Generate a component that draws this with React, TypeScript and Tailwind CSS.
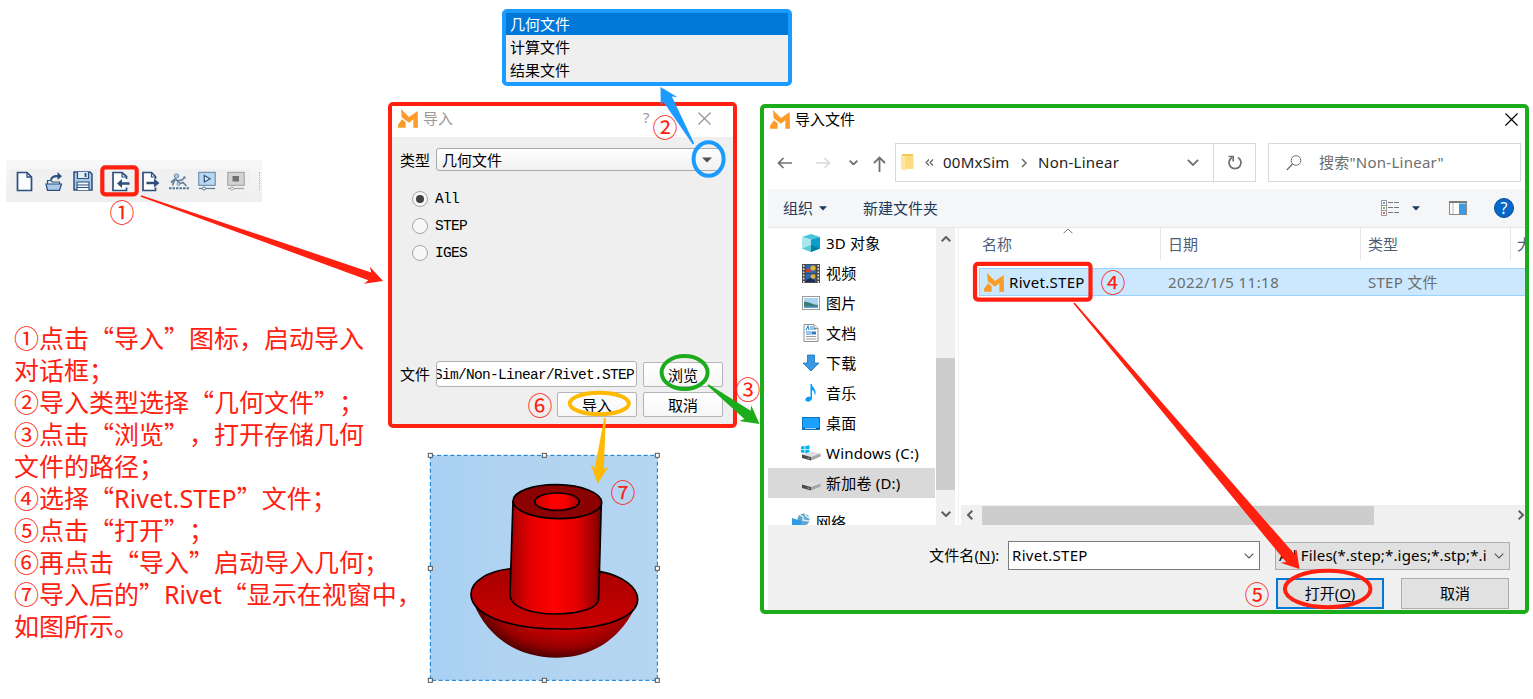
import React from "react";

const UI = "font-['Noto_Sans','Noto_Sans_CJK_SC',sans-serif]";
const CJK = "font-['Noto_Sans_CJK_SC',sans-serif]";
const MONO = "font-['Liberation_Mono',monospace]";

function Logo({ className = "" }: { className?: string }) {
  return (
    <svg className={`shrink-0 ${className}`} width="20" height="19" viewBox="0 0 60 57">
      <path fill="#fb9b28" d="M9 0 L33 24 L59 6 L60 56 H46 V31 L33 41 L11 25Z" />
      <path fill="#fb9b28" d="M0 56 V47 L12 31 L23 40 V56Z" />
    </svg>
  );
}

function Mark({ children, className }: { children: string; className: string }) {
  return (
    <span
      className={`absolute flex h-[26px] w-[26px] items-center justify-center text-[25px] leading-[26px] text-[#ff2010] ${CJK} ${className}`}
    >
      {children}
    </span>
  );
}

function Lat({ children, className = "" }: { children: string; className?: string }) {
  return <span className={`font-['Noto_Sans',sans-serif] ${className}`}>{children}</span>;
}

/* ---------- toolbar ---------- */

function ToolCell({ children, className = "" }: { children: React.ReactNode; className?: string }) {
  return <div className={`flex h-[24px] items-center justify-center bg-[#f0f0f0] ${className}`}>{children}</div>;
}

function Toolbar() {
  return (
    <div className="absolute left-[6px] top-[160px] flex h-[42px] w-[256px] items-center bg-linear-to-b from-[#f8f8f8] to-[#eeeeee] pl-[4px]">
      <ToolCell className="w-[29px]">
        <svg width="17" height="21" viewBox="0 0 17 21">
          <path d="M1.500 1.500H11L15.500 6V19.500H1.500Z" fill="#fbfcfd" stroke="#2d4f7c" strokeWidth="1.700" />
          <path d="M11 1.500V6H15.500" fill="none" stroke="#2d4f7c" strokeWidth="1.300" />
        </svg>
      </ToolCell>
      <ToolCell className="w-[29px]">
        <svg width="18" height="21" viewBox="0 0 18 21">
          <path d="M2.500 19V9.500H6L7.500 11H14.500V13" fill="#dbe9f6" stroke="#2d4f7c" strokeWidth="1.200" />
          <path d="M1 13H16.500L14.500 19.300H2.500Z" fill="#a9cbe8" stroke="#2d4f7c" strokeWidth="1.200" />
          <path d="M5 8.500C6 5 9 3.500 12.500 4V1L17 5.300L12.500 9V6.200C9 6 8 6.500 6.500 9.500Z" fill="#2d4f7c" />
        </svg>
      </ToolCell>
      <ToolCell className="w-[29px]">
        <svg width="20" height="20" viewBox="0 0 20 20">
          <path d="M1 1H17L19 3V19H1Z" fill="#a9cbe8" stroke="#2d4f7c" strokeWidth="1.500" />
          <path d="M4.500 1V7.500H15.500V1" fill="#e4eef7" stroke="#2d4f7c" strokeWidth="1.200" />
          <path d="M12.500 2V6" stroke="#2d4f7c" strokeWidth="1.800" />
          <path d="M4 19V11H16V19M4 14H16M4 16.500H16" fill="#f6f9fc" stroke="#2d4f7c" strokeWidth="1.100" />
        </svg>
      </ToolCell>
      <ToolCell className="ml-[9px] w-[28px]">
        <svg width="19" height="21" viewBox="0 0 19 21">
          <path d="M15.500 8V5.500L11 1.500H2V19.500H15.500V16.500" fill="#fbfcfd" stroke="#2d4f7c" strokeWidth="1.700" />
          <path d="M11 1.500V6H15.500" fill="none" stroke="#2d4f7c" strokeWidth="1.200" />
          <path d="M6 12.500L11 8V11.300H18.500V13.700H11V17Z" fill="#2d4f7c" />
        </svg>
      </ToolCell>
      <ToolCell className="ml-[2px] w-[29px]">
        <svg width="19" height="21" viewBox="0 0 19 21">
          <path d="M14.500 8V5.500L10.500 1.500H2V19.500H14.500V16.500" fill="#fbfcfd" stroke="#2d4f7c" strokeWidth="1.700" />
          <path d="M10.500 1.500V6H14.500" fill="none" stroke="#2d4f7c" strokeWidth="1.200" />
          <path d="M18.500 12L13 7.500V10.800H5.500V13.200H13V16.500Z" fill="#2d4f7c" />
        </svg>
      </ToolCell>
      <ToolCell className="w-[27px]">
        <svg width="20" height="17" viewBox="0 0 20 17">
          <circle cx="7.500" cy="3" r="2.100" fill="#b9d3ea" stroke="#5f7f9f" />
          <path d="M2 9.500L6 6L9 8L13.500 6.500L16 4M6 6L3.500 12.500M8 7.500L11 10.500L14 9.500L17.500 13" fill="none" stroke="#5f7f9f" strokeWidth="1.700" />
          <circle cx="15.500" cy="4.500" r="1.300" fill="#6d8dab" />
          <circle cx="9.500" cy="11" r="1.500" fill="#b9d3ea" stroke="#6d8dab" strokeWidth=".8" />
          <path d="M0 15.300H20" stroke="#56789b" strokeWidth="1.900" strokeDasharray="2.500 1" />
        </svg>
      </ToolCell>
      <ToolCell className="w-[29px]">
        <svg width="18" height="20" viewBox="0 0 18 20">
          <rect x=".8" y="1.300" width="16.400" height="13" fill="#b8d8f0" stroke="#5b7fa3" />
          <path d="M6.300 4.500L12 7.800L6.300 11Z" fill="#e4f0fa" stroke="#2d4f7c" strokeWidth="1.200" />
          <path d="M1 17.500H17" stroke="#56789b" strokeWidth="1.200" />
          <circle cx="6" cy="17.500" r="1.500" fill="#fff" stroke="#56789b" />
        </svg>
      </ToolCell>
      <ToolCell className="w-[29px]">
        <svg width="18" height="20" viewBox="0 0 18 20">
          <rect x=".8" y="1.300" width="16.400" height="13" fill="#d2d2d2" stroke="#9c9c9c" />
          <rect x="5.500" y="5" width="6.500" height="5.500" fill="#707070" />
          <path d="M1 17.500H17" stroke="#a0a0a0" strokeWidth="1.200" />
          <circle cx="5" cy="17.500" r="1.500" fill="#fff" stroke="#a0a0a0" />
        </svg>
      </ToolCell>
      <div className="ml-[9px] h-[18px] border-l border-dotted border-[#b5b5b5]" />
    </div>
  );
}

/* ---------- type menu ---------- */

function TypeMenu() {
  return (
    <div className={`absolute left-[502px] top-[9px] h-[77px] w-[290px] rounded-[5px] border-4 border-[#1b9bff] bg-[#efefef] text-[15px] leading-[21px] ${CJK}`}>
      <div className="h-[22px] bg-[#0078d7] pl-[4px] text-white">几何文件</div>
      <div className="h-[23px] pl-[4px] leading-[23px] text-black">计算文件</div>
      <div className="h-[23px] pl-[4px] leading-[23px] text-black">结果文件</div>
    </div>
  );
}

/* ---------- import dialog ---------- */

function Radio({ label, on = false }: { label: string; on?: boolean }) {
  return (
    <div className="flex h-[27px] items-center gap-[7px]">
      <span className="flex h-[16px] w-[16px] items-center justify-center rounded-full border border-[#a6a6a6] bg-[#f7f7f7]">
        {on && <span className="h-[8px] w-[8px] rounded-full bg-[#404040]" />}
      </span>
      <span className={`text-[14.5px] leading-[20px] tracking-[-0.7px] ${MONO}`}>{label}</span>
    </div>
  );
}

function PushButton({ children }: { children: string }) {
  return (
    <div className="flex h-[25px] w-[80px] items-center justify-center rounded-[2px] border border-[#b4b4b4] bg-linear-to-b from-white to-[#f6f6f6] leading-[23px]">
      {children}
    </div>
  );
}

function ImportDialog() {
  return (
    <div
      className={`absolute left-[388px] top-[102px] flex h-[326px] w-[349px] flex-col rounded-[5px] border-4 border-[#ff2010] bg-[#efefef] text-[15px] text-black ${CJK}`}
    >
      <div className="flex h-[31px] shrink-0 items-start bg-white pl-[6px] text-[#999]">
        <Logo className="mt-[3px]" />
        <span className="ml-[5px] leading-[23px]">导入</span>
        <span className={`ml-[190px] leading-[23px] ${UI}`}>?</span>
        <svg className="ml-[48px] mt-[6px]" width="13" height="13" viewBox="0 0 13 13">
          <path d="M.5 .5L12.500 12.500M12.500 .5L.5 12.500" stroke="#8f8f8f" strokeWidth="1.100" />
        </svg>
      </div>
      <div className="mt-[11px] flex h-[23px] shrink-0 items-center pl-[8px]">
        <span className="w-[36px] leading-[23px]">类型</span>
        <div className="flex h-[23px] w-[287px] items-center justify-between rounded-[3px] border border-[#aaa] bg-linear-to-b from-white to-[#f0f0f0] pl-[5px] pr-[10px]">
          <span className="leading-[21px]">几何文件</span>
          <svg width="10" height="6" viewBox="0 0 10 6">
            <path d="M0 .5H10L5 5.500Z" fill="#505050" />
          </svg>
        </div>
      </div>
      <div className="mt-[14px] flex shrink-0 flex-col pl-[20px]">
        <Radio label="All" on />
        <Radio label="STEP" />
        <Radio label="IGES" />
      </div>
      <div className="mt-[95px] flex h-[26px] shrink-0 items-center pl-[8px]">
        <span className="w-[36px] leading-[26px]">文件</span>
        <div className="flex h-[26px] w-[201px] items-center justify-end overflow-hidden whitespace-nowrap rounded-[3px] border border-[#b0b0b0] bg-white pr-[2px]">
          <span className={`pt-[2px] text-[14.5px] leading-[22px] tracking-[-0.7px] ${MONO}`}>Sim/Non-Linear/Rivet.STEP</span>
        </div>
        <div className="ml-[6px]">
          <PushButton>浏览</PushButton>
        </div>
      </div>
      <div className="mt-[5px] flex shrink-0 gap-[6px] pl-[165px]">
        <PushButton>导入</PushButton>
        <PushButton>取消</PushButton>
      </div>
    </div>
  );
}

/* ---------- instructions ---------- */

function Notes() {
  return (
    <div
      lang="zh-CN"
      className={`absolute left-[14px] top-[321px] grid auto-rows-[32px] whitespace-nowrap text-[25px] leading-[32px] text-[#ff2010] [text-spacing-trim:space-all] ${CJK}`}
    >
      <div>①点击“导入”图标，启动导入</div>
      <div>对话框；</div>
      <div>②导入类型选择“几何文件”；</div>
      <div>③点击“浏览”，打开存储几何</div>
      <div>文件的路径；</div>
      <div>
        ④选择“<Lat className="tracking-[0.15px]">Rivet.STEP</Lat>”文件；
      </div>
      <div>⑤点击“打开”；</div>
      <div>⑥再点击“导入”启动导入几何；</div>
      <div>
        ⑦导入后的”<Lat>Rivet</Lat>“显示在视窗中，
      </div>
      <div>如图所示。</div>
    </div>
  );
}

/* ---------- rivet view ---------- */

function RivetView() {
  const handles = [
    [31, 46], [373, 46], [712, 46],
    [31, 385], [712, 385],
    [31, 721], [373, 721], [712, 721],
  ];
  return (
    <svg className="absolute left-[420px] top-[440px]" width="250" height="250" viewBox="0 0 750 750">
      <defs>
        <linearGradient id="sky">
          <stop offset="0" stopColor="#a8d0f3" />
          <stop offset=".3" stopColor="#b0d3f1" />
          <stop offset="1" stopColor="#b5d6f1" />
        </linearGradient>
        <linearGradient id="shaft">
          <stop offset="0" stopColor="#9c0000" />
          <stop offset=".22" stopColor="#e40000" />
          <stop offset=".48" stopColor="#ff0000" />
          <stop offset=".72" stopColor="#e60000" />
          <stop offset=".9" stopColor="#a80000" />
          <stop offset="1" stopColor="#700000" />
        </linearGradient>
        <linearGradient id="hole">
          <stop offset="0" stopColor="#c80000" />
          <stop offset=".4" stopColor="#ff0000" />
          <stop offset=".7" stopColor="#f40000" />
          <stop offset="1" stopColor="#a00000" />
        </linearGradient>
        <linearGradient id="rim" x2="0" y2="1">
          <stop offset="0" stopColor="#a80000" />
          <stop offset="1" stopColor="#ca0000" />
        </linearGradient>
        <radialGradient id="dome" gradientUnits="userSpaceOnUse" cx="430" cy="480" r="270" gradientTransform="translate(0 168) scale(1 .65)">
          <stop offset="0" stopColor="#e00000" />
          <stop offset=".5" stopColor="#c80000" />
          <stop offset=".8" stopColor="#9a0000" />
          <stop offset="1" stopColor="#4c0000" />
        </radialGradient>
      </defs>
      <rect x="31" y="46" width="681" height="675" fill="url(#sky)" stroke="#0078d7" strokeWidth="3" strokeDasharray="12 8" />
      <path d="M163 495C195 570 270 653 410 653C540 653 612 570 643 507Z" fill="url(#dome)" />
      <path
        d="M153 462C153 424 205 392 272 386V400H539V394C610 408 653 442 653 478C653 530 558 567 420 567C260 567 153 522 153 462Z"
        fill="url(#rim)"
        stroke="#000"
        strokeWidth="5"
      />
      <path d="M279 182L270 468C274 502 336 522 404 522C480 522 536 504 536 476L544 186C530 250 300 250 279 182Z" fill="url(#shaft)" stroke="#000" strokeWidth="5" />
      <ellipse cx="412" cy="185" rx="133" ry="51" fill="#8b0000" stroke="#000" strokeWidth="5" transform="rotate(1 412 185)" />
      <ellipse cx="411" cy="185" rx="67" ry="26" fill="url(#hole)" stroke="#000" strokeWidth="5" />
      {handles.map(([x, y]) => (
        <rect key={`${x}-${y}`} x={x - 6} y={y - 6} width="12" height="12" fill="#fff" stroke="#555" strokeWidth="3" />
      ))}
    </svg>
  );
}

/* ---------- open-file window ---------- */

function Chevron({ color = "#606060", w = 10, sw = 1.5, className = "" }: { color?: string; w?: number; sw?: number; className?: string }) {
  return (
    <svg className={`shrink-0 ${className}`} width={w} height={w * 0.6} viewBox="0 0 10 6">
      <path d="M.7 .7L5 5L9.300 .7" fill="none" stroke={color} strokeWidth={sw} />
    </svg>
  );
}

function Drive({ win = false }: { win?: boolean }) {
  return (
    <svg width="20" height="18" viewBox="0 0 20 18">
      {win && (
        <path d="M0 2.500L3.500 2V5H0ZM4.300 1.900L8.500 1.200V5H4.300ZM0 5.800H3.500V9L0 8.500ZM4.300 5.800H8.500V9.700L4.300 9.100Z" fill="#00b4f0" />
      )}
      <path d="M1 10.500L10 7.500L19.500 9.500L10 13Z" fill="#dedee0" />
      <path d="M1 10.500L10 13V16.500L1 14Z" fill="#4a4a4a" />
      <path d="M10 13L19.500 9.500V12.500L10 16.500Z" fill="#a5a5a5" />
      <path d="M6.500 13.800L8.500 14.400" stroke="#6fdc6f" strokeWidth="1" />
    </svg>
  );
}

const icons: Record<string, React.ReactNode> = {
  cube: (
    <svg width="18" height="18" viewBox="0 0 18 18">
      <path d="M9 0L18 3L9 5.500L0 3Z" fill="#45c3d8" />
      <path d="M0 3L9 5.500V18L0 14.500Z" fill="#a9e6ec" />
      <path d="M18 3L9 5.500V18L18 14.500Z" fill="#0a9fcb" />
      <path d="M0 14.500L9 11V18Z" fill="#5ccbd8" />
      <path d="M9 11L18 14.500L9 18Z" fill="#087f9f" />
    </svg>
  ),
  video: (
    <svg width="18" height="19" viewBox="0 0 18 19">
      <rect width="18" height="19" fill="#4a4a4a" />
      <rect x="4" y="1" width="10" height="8" fill="#3267b8" />
      <rect x="4" y="10" width="10" height="8" fill="#3267b8" />
      <circle cx="11" cy="4" r="2.600" fill="#e6b52e" />
      <circle cx="11" cy="12.500" r="2.300" fill="#e6b52e" />
      <path d="M4 5H8L9 8H4Z" fill="#d5402b" />
      <path d="M4 16L8 14L13 16V18H4Z" fill="#1a2d58" />
      <path d="M1.700 1V19M16.300 1V19" stroke="#e8e8e8" strokeWidth="1.500" strokeDasharray="1.700 1.500" />
    </svg>
  ),
  picture: (
    <svg width="18" height="14" viewBox="0 0 18 14">
      <rect x=".5" y=".5" width="17" height="13" fill="#fff" stroke="#9a9a9a" />
      <rect x="2" y="2" width="14" height="10" fill="#a9d4f2" />
      <path d="M2 6C6 5 10 9 16 9V12H2Z" fill="#3d7a78" />
      <path d="M2 10.500H16V12H2Z" fill="#5f9fd0" />
    </svg>
  ),
  doc: (
    <svg width="16" height="18" viewBox="0 0 16 18">
      <path d="M1 .5H11L15 4.500V17.500H1Z" fill="#fff" stroke="#8f8f8f" />
      <path d="M11 .5V4.500H15" fill="#ddd" stroke="#8f8f8f" />
      <path d="M3 6L5 2L6 6M7 3H10M7 5H13M3 8H8M3 10H8" stroke="#2b8ed6" strokeWidth="1.100" fill="none" />
      <path d="M3 12.500H13M3 15H13" stroke="#9a9a9a" />
      <rect x="8.500" y="7.500" width="4.500" height="3" fill="#3a78b8" />
    </svg>
  ),
  down: (
    <svg width="18" height="18" viewBox="0 0 18 18">
      <path d="M5.500 1H12.500V9H17L9 17L1 9H5.500Z" fill="#3b97e3" stroke="#1d73bd" strokeWidth=".8" />
    </svg>
  ),
  music: (
    <svg width="18" height="18" viewBox="0 0 18 18">
      <path d="M8.500 0H9.800C10.500 4 14.500 5 13.500 10L12.500 11C12.800 8 11.500 6.500 10 6V14.500C9.500 17 7 18 5 17.500C2.500 17 3 13.500 6 12.800C7 12.500 8 12.700 8.500 13Z" fill="#0a9bf5" />
    </svg>
  ),
  desktop: (
    <svg width="18" height="13" viewBox="0 0 18 13">
      <rect x=".5" y=".5" width="17" height="12" fill="#1ba1ff" stroke="#0f75bd" />
      <path d="M1 11.500H17" stroke="#0b5c97" strokeWidth="1.200" />
      <path d="M3 11.500H14" stroke="#d8efff" strokeWidth=".8" />
    </svg>
  ),
  net: (
    <svg width="18" height="18" viewBox="0 0 18 18">
      <circle cx="11.500" cy="6.500" r="6" fill="#5fa3c9" />
      <path d="M8 2C11 3 12 5 11 7C13 8 15 7 17 8M13 1C13 3 15 4 17 5" stroke="#d9edf4" strokeWidth="1.500" fill="none" />
      <path d="M0 5L9 8V18L0 15Z" fill="#2b9be8" />
    </svg>
  ),
};

function SideItem({ icon, label, selected = false }: { icon: React.ReactNode; label: string; selected?: boolean }) {
  return (
    <div className={`flex h-[30px] shrink-0 items-center whitespace-nowrap pl-[33px] ${selected ? "bg-[#d9d9d9]" : ""}`}>
      <span className="flex w-[20px] justify-center">{icon}</span>
      <span className="ml-[5px] leading-[29px] tracking-[0.2px]">{label}</span>
    </div>
  );
}

function Sidebar() {
  return (
    <div className="flex h-[297px] w-[167px] shrink-0 flex-col overflow-hidden">
      <SideItem icon={icons.cube} label="3D 对象" />
      <SideItem icon={icons.video} label="视频" />
      <SideItem icon={icons.picture} label="图片" />
      <SideItem icon={icons.doc} label="文档" />
      <SideItem icon={icons.down} label="下载" />
      <SideItem icon={icons.music} label="音乐" />
      <SideItem icon={icons.desktop} label="桌面" />
      <SideItem icon={<Drive win />} label="Windows (C:)" />
      <SideItem icon={<Drive />} label="新加卷 (D:)" selected />
      <div className="mt-[9px] flex h-[30px] shrink-0 items-center pl-[24px]">
        {icons.net}
        <span className="ml-[6px]">网络</span>
      </div>
    </div>
  );
}

function FileWindow() {
  return (
    <div
      className={`absolute left-[760px] top-[104px] h-[510px] w-[769px] overflow-hidden rounded-[5px] border-4 border-[#1bab1b] bg-white text-[15px] text-black ${UI}`}
    >
      <div className="flex h-full flex-col pl-[4px]">
        <div className="flex h-[35px] shrink-0 items-start pl-[2px]">
          <Logo className="mt-[2px]" />
          <span className="ml-[5px] leading-[22px]">导入文件</span>
          <svg className="ml-auto mr-[7px] mt-[5px]" width="13" height="13" viewBox="0 0 13 13">
            <path d="M.5 .5L12.500 12.500M12.500 .5L.5 12.500" stroke="#000" strokeWidth="1.200" />
          </svg>
        </div>

        <div className="flex h-[46px] shrink-0 items-start">
          <div className="flex h-[39px] w-[127px] items-center pl-[9px]">
            <svg width="15" height="12" viewBox="0 0 15 12">
              <path d="M6.500 1L1.500 6L6.500 11M1.500 6H15" fill="none" stroke="#707070" strokeWidth="1.700" />
            </svg>
            <svg className="ml-[24px]" width="15" height="12" viewBox="0 0 15 12">
              <path d="M8.500 1L13.500 6L8.500 11M13.500 6H0" fill="none" stroke="#d8d8d8" strokeWidth="1.500" />
            </svg>
            <Chevron className="ml-[18px]" color="#707070" w={9} sw={2} />
            <svg className="ml-[15px] mt-[3px]" width="13" height="16" viewBox="0 0 13 16">
              <path d="M1 7L6.500 1.500L12 7M6.500 1.500V16" fill="none" stroke="#707070" strokeWidth="1.800" />
            </svg>
          </div>
          <div className="flex h-[39px] w-[361px] items-center border border-[#d9d9d9] pl-[5px]">
            <svg width="13" height="17" viewBox="0 0 13 17">
              <path d="M1 0H12V15H3L1 14Z" fill="#f3c95c" />
              <path d="M0 1L4 2.500V17L0 15Z" fill="#ffe69b" />
              <path d="M4 2H12.500V15H4Z" fill="#fbdc83" />
            </svg>
            <svg className="ml-[11px]" width="9" height="7" viewBox="0 0 9 7">
              <path d="M4 .5L1 3.500L4 6.500M8 .5L5 3.500L8 6.500" fill="none" stroke="#606060" strokeWidth="1.200" />
            </svg>
            <span className="ml-[9px] w-[69px] pb-px tracking-[0.25px] text-[#222]">00MxSim</span>
            <svg className="ml-[9px]" width="7" height="10" viewBox="0 0 7 10">
              <path d="M1 1L5 5L1 9" fill="none" stroke="#707070" strokeWidth="1.600" />
            </svg>
            <span className="ml-[10px] w-[82px] whitespace-nowrap pb-px tracking-[0.25px] text-[#222]">Non-Linear</span>
            <Chevron className="ml-[67px]" color="#707070" w={12} sw={1.5} />
            <span className="ml-[14px] h-[37px] border-l border-[#d9d9d9]" />
            <svg className="ml-[13px]" width="16" height="16" viewBox="0 0 16 16">
              <path d="M5 2.500A6 6 0 1 0 11 2.500" fill="none" stroke="#707070" strokeWidth="1.800" />
              <path d="M1.500 1.500H6.200V6.500" fill="none" stroke="#707070" strokeWidth="1.700" />
            </svg>
          </div>
          <div className="ml-[12px] flex h-[39px] w-[253px] items-center border border-[#d9d9d9] pl-[17px] text-[#6d6d6d]">
            <svg width="16" height="16" viewBox="0 0 16 16">
              <circle cx="10" cy="5.500" r="4.800" fill="none" stroke="#707070" />
              <path d="M6.500 9L.8 15" stroke="#707070" strokeWidth="1.300" />
            </svg>
            <span className="ml-[17px] whitespace-nowrap pb-px tracking-[0.25px]">搜索"Non-Linear"</span>
          </div>
        </div>

        <div className="flex h-[39px] shrink-0 items-center border-b border-[#e5e8eb] bg-[#f5f6f8] pl-[15px] text-[#1e395b]">
          <span>组织</span>
          <svg className="ml-[6px]" width="8" height="5" viewBox="0 0 8 5">
            <path d="M0 .3H8L4 4.500Z" fill="#1e395b" />
          </svg>
          <span className="ml-[36px]">新建文件夹</span>
          <svg className="ml-[443px]" width="18" height="16" viewBox="0 0 18 16">
            <path d="M.5 .5H5.500V15.500H.5ZM.5 5.500H5.500M.5 10.500H5.500" fill="#fff" stroke="#999" />
            <path d="M2 3H4" stroke="#3b83bd" strokeWidth="1.600" />
            <path d="M2 8H4" stroke="#5a9a3c" strokeWidth="1.600" />
            <path d="M2 13H4" stroke="#c4302b" strokeWidth="1.600" />
            <path d="M7 2.500H18M7 7.500H18M7 12.500H18" stroke="#777" strokeDasharray="5 1" />
          </svg>
          <svg className="ml-[13px]" width="8" height="5" viewBox="0 0 8 5">
            <path d="M0 .3H8L4 4.500Z" fill="#1e395b" />
          </svg>
          <svg className="ml-[29px]" width="18" height="14" viewBox="0 0 18 14">
            <rect x=".5" y=".5" width="17" height="13" fill="#fff" stroke="#8a8a8a" />
            <path d="M0 1.200H18" stroke="#777" strokeWidth="1.600" />
            <path d="M4 2V13" stroke="#bbb" />
            <rect x="10" y="2.500" width="7" height="11" fill="#3d9be3" />
          </svg>
          <span className="ml-[27px] flex h-[20px] w-[20px] items-center justify-center rounded-full border border-[#0b4f96] bg-[#0567c8] text-[16px] leading-[18px] text-white">
            ?
          </span>
        </div>

        <div className="flex h-[297px] shrink-0">
          <Sidebar />
          <div className="ml-px flex h-[297px] w-[19px] shrink-0 flex-col items-center bg-[#f0f0f0] pt-[8px]">
            <Chevron className="rotate-180" w={10} sw={2} />
            <div className="mt-[116px] h-[132px] w-full bg-[#cdcdcd]" />
            <Chevron className="mt-[21px]" w={10} sw={2} />
          </div>
          <div className="ml-[3px] flex h-[297px] w-[567px] flex-col border-l border-[#f0f0f0]">
            <div className="flex h-[32px] shrink-0 text-[#4c607a]">
              <div className="relative w-[202px] shrink-0 border-r border-[#e5e5e5] pl-[23px] leading-[32px]">
                名称
                <svg className="absolute left-[104px] top-0" width="10" height="6" viewBox="0 0 10 6">
                  <path d="M.5 5.300L5 1L9.500 5.300" fill="none" stroke="#777" />
                </svg>
              </div>
              <div className="w-[200px] shrink-0 border-r border-[#e5e5e5] pl-[7px] leading-[32px]">日期</div>
              <div className="w-[150px] shrink-0 border-r border-[#e5e5e5] pl-[7px] leading-[32px]">类型</div>
              <div className="w-[14px] shrink-0 overflow-hidden pl-[6px] leading-[32px]">大</div>
            </div>
            <div className="ml-[20px] mt-[8px] flex h-[28px] shrink-0 items-center border border-r-0 border-[#99d1ff] bg-[#cce8ff] leading-[25px] text-[#6d6d6d]">
              <Logo className="ml-[4px]" />
              <span className="ml-[5px] w-[159px] tracking-[0.3px] text-black">Rivet.STEP</span>
              <span className="w-[200px] tracking-[0.45px]">2022/1/5 11:18</span>
              <span className="tracking-[0.25px]">STEP 文件</span>
            </div>
            <div className="ml-[2px] mt-auto flex h-[20px] shrink-0 items-center bg-[#f0f0f0]">
              <Chevron className="ml-[4px] rotate-90" w={10} sw={2} />
              <div className="ml-[7px] h-[19px] w-[392px] bg-[#cdcdcd]" />
              <Chevron className="-mr-px ml-auto -rotate-90" w={10} sw={2} />
            </div>
          </div>
        </div>

        <div className="flex grow flex-col bg-[#f0f0f0] pt-[16px]">
          <div className="flex h-[29px] shrink-0 items-center">
            <span className="w-[240px] whitespace-nowrap pb-px pl-[161px] tracking-[0.15px]">
              文件名(<u className="underline-offset-2">N</u>):
            </span>
            <div className="flex h-[29px] w-[252px] items-center justify-between border border-[#7a7a7a] bg-white pl-[3px] pr-[5px]">
              <span className="pb-px tracking-[0.3px]">Rivet.STEP</span>
              <Chevron sw={1.1} color="#555" />
            </div>
            <div className="ml-[15px] flex h-[28px] w-[235px] items-center justify-between border border-[#adadad] bg-[#e1e1e1] pl-[3px] pr-[5px]">
              <span className="w-[207px] overflow-hidden whitespace-nowrap pb-px tracking-[0.15px]">All Files(*.step;*.iges;*.stp;*.igs)</span>
              <Chevron sw={1.1} color="#555" />
            </div>
          </div>
          <div className="mt-[8px] flex h-[31px] shrink-0 pl-[508px]">
            <div className="flex h-[31px] w-[108px] items-center justify-center border-2 border-[#0078d7] bg-[#e1e1e1]">
              <span className="pb-px">
                打开(<u className="underline-offset-2">O</u>)
              </span>
            </div>
            <div className="ml-[17px] flex h-[31px] w-[108px] items-center justify-center border border-[#adadad] bg-[#e1e1e1] pb-px">取消</div>
          </div>
        </div>
      </div>
    </div>
  );
}

/* ---------- annotations ---------- */

type ArrowProps = { from: [number, number]; to: [number, number]; color: string; neck: number; head: number; len: number };

function Arrow({ from, to, color, neck, head, len }: ArrowProps) {
  const dx = to[0] - from[0];
  const dy = to[1] - from[1];
  const d = Math.hypot(dx, dy);
  const ux = dx / d;
  const uy = dy / d;
  const at = (back: number, side: number) => `${to[0] - ux * back - uy * side},${to[1] - uy * back + ux * side}`;
  const points = [at(d, 0.8), at(len - 3, neck), at(len, head), at(0, 0), at(len, -head), at(len - 3, -neck), at(d, -0.8)];
  return <polygon points={points.join(" ")} fill={color} />;
}

function Annotations() {
  return (
    <>
      <svg className="pointer-events-none absolute left-0 top-0" width="1533" height="699" viewBox="0 0 1533 699" fill="none">
        <rect x="102.300" y="167.300" width="34.400" height="27" rx="3" stroke="#ff2010" strokeWidth="4.200" />
        <rect x="975" y="263.800" width="115.500" height="35.800" rx="3" stroke="#ff2010" strokeWidth="4.200" />
        <ellipse cx="708.600" cy="159" rx="15" ry="16.700" stroke="#1b9bff" strokeWidth="4" />
        <ellipse cx="684.600" cy="372.500" rx="23" ry="16.500" stroke="#1bab1b" strokeWidth="4" />
        <ellipse cx="599.300" cy="403.500" rx="29.500" ry="10.700" stroke="#ffb900" strokeWidth="4" />
        <ellipse cx="1327.700" cy="589" rx="42.800" ry="18.200" stroke="#ff2010" strokeWidth="4" />
        <Arrow from={[141, 196]} to={[383, 281]} color="#ff2010" neck={4.2} head={9} len={17} />
        <Arrow from={[1074, 303]} to={[1299.5, 569]} color="#ff2010" neck={5.8} head={10.5} len={17} />
        <Arrow from={[693.5, 144]} to={[660.5, 87]} color="#1b9bff" neck={5} head={9.5} len={17} />
        <Arrow from={[708, 385]} to={[759.5, 424]} color="#1bab1b" neck={5.2} head={10} len={18} />
        <Arrow from={[605, 418]} to={[597.7, 483.5]} color="#ffb900" neck={4.5} head={9} len={18} />
      </svg>
      <Mark className="left-[109px] top-[198px]">①</Mark>
      <Mark className="left-[652px] top-[113px]">②</Mark>
      <Mark className="left-[735px] top-[375px]">③</Mark>
      <Mark className="left-[1100px] top-[268px]">④</Mark>
      <Mark className="left-[1244px] top-[580px]">⑤</Mark>
      <Mark className="left-[527px] top-[391px]">⑥</Mark>
      <Mark className="left-[610px] top-[478px]">⑦</Mark>
    </>
  );
}

export default function App() {
  return (
    <div lang="zh-CN" className="relative h-[699px] w-[1533px] overflow-hidden bg-white">
      <Toolbar />
      <TypeMenu />
      <ImportDialog />
      <Notes />
      <RivetView />
      <FileWindow />
      <Annotations />
    </div>
  );
}
